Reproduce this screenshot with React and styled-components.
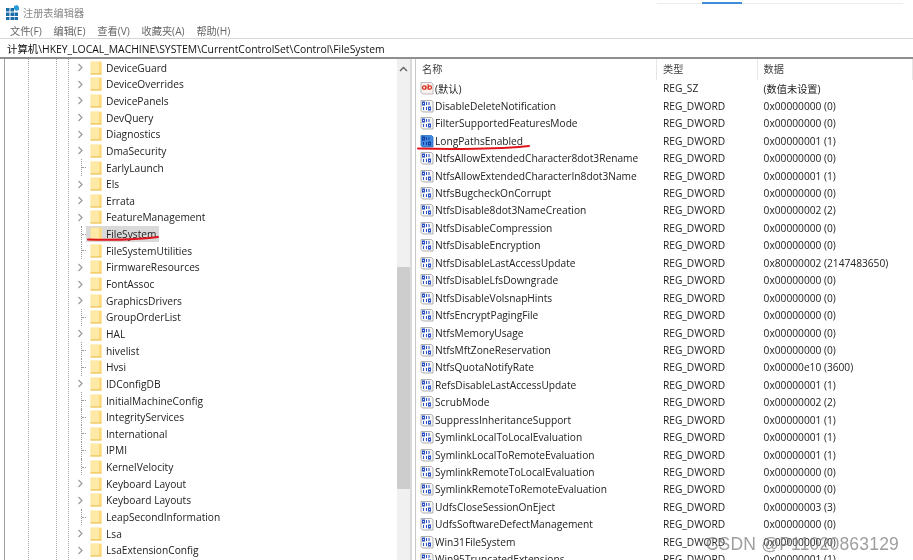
import React from 'react'
import styled, { createGlobalStyle } from 'styled-components'

const Global = createGlobalStyle`
  html, body { margin: 0; padding: 0; background: #fff; overflow: hidden; }
  #root { width: 913px; height: 560px; }
`

const uiFont = `"Open Sans", "Noto Sans CJK SC", sans-serif`

const Window = styled.div`
  position: relative;
  width: 913px;
  height: 560px;
  display: flex;
  flex-direction: column;
  overflow: hidden;
  background: #fff;
  font-family: ${uiFont};
  font-size: 10.2px;
  color: #222;
  filter: blur(0.3px);
`
const TitleBar = styled.div`
  height: 22px;
  flex: none;
  display: flex;
  align-items: center;
  gap: 3px;
  padding: 3px 0 0 6px;
  box-sizing: border-box;
  color: #8a8a8a;
`
const MenuBar = styled.div`
  height: 16px;
  flex: none;
  display: flex;
  gap: 11.8px;
  padding-left: 10px;
  align-items: center;
  color: #666;
`
const AddressBar = styled.div`
  height: 21px;
  flex: none;
  box-sizing: border-box;
  border-top: 1px solid #d8d8d8;
  border-bottom: 2px solid #8f8f8f;
  padding-left: 7px;
  display: flex;
  align-items: center;
  font-size: 10.4px;
  color: #111;
`
const Body = styled.div`
  flex: 1;
  min-height: 0;
  display: flex;
  overflow: hidden;
`
const TreePane = styled.div`
  width: 393px;
  flex: none;
  box-sizing: border-box;
  padding-top: 0.4px;
  border-left: 1px solid #a0a0a0;
  margin-left: 4px;
  background-image:
    linear-gradient(#a8a8a8 50%, transparent 50%),
    linear-gradient(#a8a8a8 50%, transparent 50%),
    linear-gradient(#a8a8a8 50%, transparent 50%);
  background-size: 1px 2px;
  background-repeat: repeat-y;
  background-position: 23px 0, 51px 0, 63px 0;
`
const TreeRow = styled.div`
  height: 16.65px;
  display: flex;
  align-items: center;
  padding-left: 72px;
`
const Twist = styled.span`
  width: 9px;
  flex: none;
  display: flex;
  align-items: center;
  color: #9a9a9a;
`
const Connector = styled.span`
  width: 5px;
  height: 100%;
  margin-left: 4px;
  flex: none;
  box-sizing: border-box;
  border-left: 1px dotted #999;
  display: flex;
  align-items: center;
  &::after {
    content: '';
    width: 100%;
    border-top: 1px dotted #999;
  }
`
const Label = styled.div`
  display: flex;
  align-items: center;
  gap: 4px;
  height: 16.65px;
  padding: 0 3px 0 4px;
  background: ${p => (p.$on ? '#d9d9d9' : 'transparent')};
`
const Scrollbar = styled.div`
  width: 13px;
  flex: none;
  background: #f0f0f0;
  display: flex;
  flex-direction: column;
  align-items: center;
`
const ScrollUp = styled.div`
  height: 17px;
  margin-top: 3px;
  color: #606060;
`
const ScrollGap = styled.div`
  height: ${p => p.$h}px;
  flex: none;
`
const ScrollThumb = styled.div`
  width: 100%;
  height: 222px;
  flex: none;
  background: #cdcdcd;
`
const Splitter = styled.div`
  width: 6px;
  flex: none;
  background: #fff;
  border-left: 2px solid #d9d9d9;
  border-right: 1px solid #c9c9c9;
  box-sizing: border-box;
`
const ListPane = styled.div`
  flex: 1;
  min-width: 0;
`
const Grid = styled.div`
  display: grid;
  grid-template-columns: 241px 100.6px 1fr;
  align-items: center;
`
const HeadRow = styled(Grid)`
  height: 20.7px;
  color: #444;
`
const HeadCell = styled.div`
  height: 100%;
  display: flex;
  align-items: center;
  padding: 0 0 2px 6px;
  box-sizing: border-box;
  border-right: 1px solid #e6e6e6;
`
const ListRow = styled(Grid)`
  height: 17.45px;
  white-space: nowrap;
`
const NameCell = styled.div`
  display: flex;
  align-items: center;
  gap: 1px;
  padding-left: 4px;
`
const ValueCell = styled.div`
  padding-left: 6px;
`
const Watermark = styled.div`
  position: absolute;
  right: 14px;
  bottom: 5px;
  font-family: "Liberation Sans", sans-serif;
  font-size: 17.5px;
  letter-spacing: 0.2px;
  color: rgba(120, 120, 120, 0.72);
`
const Ink = styled.svg`
  position: absolute;
  left: 0;
  top: 0;
  pointer-events: none;
`
const TabTrace = styled.div`
  position: absolute;
  left: 657px;
  top: 3px;
  width: 246px;
  height: 1px;
  background: #ededed;
`
const TabActive = styled.div`
  position: absolute;
  left: 702px;
  top: 2px;
  width: 40px;
  height: 2px;
  background: #3c8fd6;
`

const Chevron = () => (
  <svg width="7" height="9" viewBox="0 0 7 9">
    <path d="M1.5 1 L5 4.5 L1.5 8" fill="none" stroke="currentColor" strokeWidth="1.2" />
  </svg>
)

const Folder = () => (
  <svg width="12" height="14" viewBox="0 0 12 14" style={{ flex: 'none' }}>
    <rect x="0.5" y="0.5" width="11" height="13" fill="#fde08a" />
    <rect x="1" y="1" width="8" height="11.5" fill="#ffe9a6" />
    <rect x="9" y="1" width="2.5" height="12" fill="#fbd97c" />
    <rect x="0.5" y="12.3" width="11" height="1.2" fill="#edc660" />
  </svg>
)

const BinIcon = ({ active }) => {
  const ink = active ? '#143f9e' : '#2a50c8'
  return (
    <svg width="14" height="14" viewBox="0 0 14 14" style={{ flex: 'none' }}>
      <path d="M1 1.5 H11.5 L13 3 V13 H2.5 L1 11.5 Z" fill={active ? '#3f8ae0' : '#f6f6f6'} stroke={active ? '#2f6cc0' : '#a0a0a0'} strokeWidth="0.8" />
      <g fill="none" stroke={ink} strokeWidth="1">
        <rect x="2.5" y="3" width="2" height="3" />
        <path d="M6.5 3 V6 M9 3 V6" />
        <path d="M3.5 8 V11 M6.5 8 V11" />
        <rect x="8.5" y="8" width="2" height="3" />
      </g>
    </svg>
  )
}

const StrIcon = () => (
  <svg width="14" height="14" viewBox="0 0 14 14" style={{ flex: 'none' }}>
    <path d="M1 1.5 H11.5 L13 3 V13 H2.5 L1 11.5 Z" fill="#fbf3f0" stroke="#b0a8a8" strokeWidth="0.8" />
    <circle cx="4.2" cy="6.6" r="1.7" fill="none" stroke="#d8301f" strokeWidth="1.2" />
    <path d="M5.9 4.8 V8.4" stroke="#d8301f" strokeWidth="1.1" />
    <circle cx="9.8" cy="6.6" r="1.7" fill="none" stroke="#d8301f" strokeWidth="1.2" />
    <path d="M8.1 3 V8.4" stroke="#d8301f" strokeWidth="1.1" />
  </svg>
)

const treeItems = [
  ['DeviceGuard'], ['DeviceOverrides'], ['DevicePanels'], ['DevQuery'], ['Diagnostics'],
  ['DmaSecurity'], ['EarlyLaunch', true], ['Els'], ['Errata'], ['FeatureManagement'],
  ['FileSystem', true, true], ['FileSystemUtilities', true], ['FirmwareResources'],
  ['FontAssoc'], ['GraphicsDrivers'], ['GroupOrderList', true], ['HAL'], ['hivelist', true],
  ['Hvsi', true], ['IDConfigDB'], ['InitialMachineConfig', true], ['IntegrityServices', true],
  ['International', true], ['IPMI', true], ['KernelVelocity', true], ['Keyboard Layout'],
  ['Keyboard Layouts'], ['LeapSecondInformation', true], ['Lsa'], ['LsaExtensionConfig'],
]

const dw = (name, value) => ({ name, value, type: 'REG_DWORD' })
const listItems = [
  { name: '(默认)', value: '(数值未设置)', type: 'REG_SZ', str: true },
  dw('DisableDeleteNotification', '0x00000000 (0)'),
  dw('FilterSupportedFeaturesMode', '0x00000000 (0)'),
  { ...dw('LongPathsEnabled', '0x00000001 (1)'), active: true },
  dw('NtfsAllowExtendedCharacter8dot3Rename', '0x00000000 (0)'),
  dw('NtfsAllowExtendedCharacterIn8dot3Name', '0x00000001 (1)'),
  dw('NtfsBugcheckOnCorrupt', '0x00000000 (0)'),
  dw('NtfsDisable8dot3NameCreation', '0x00000002 (2)'),
  dw('NtfsDisableCompression', '0x00000000 (0)'),
  dw('NtfsDisableEncryption', '0x00000000 (0)'),
  dw('NtfsDisableLastAccessUpdate', '0x80000002 (2147483650)'),
  dw('NtfsDisableLfsDowngrade', '0x00000000 (0)'),
  dw('NtfsDisableVolsnapHints', '0x00000000 (0)'),
  dw('NtfsEncryptPagingFile', '0x00000000 (0)'),
  dw('NtfsMemoryUsage', '0x00000000 (0)'),
  dw('NtfsMftZoneReservation', '0x00000000 (0)'),
  dw('NtfsQuotaNotifyRate', '0x00000e10 (3600)'),
  dw('RefsDisableLastAccessUpdate', '0x00000001 (1)'),
  dw('ScrubMode', '0x00000002 (2)'),
  dw('SuppressInheritanceSupport', '0x00000001 (1)'),
  dw('SymlinkLocalToLocalEvaluation', '0x00000001 (1)'),
  dw('SymlinkLocalToRemoteEvaluation', '0x00000001 (1)'),
  dw('SymlinkRemoteToLocalEvaluation', '0x00000000 (0)'),
  dw('SymlinkRemoteToRemoteEvaluation', '0x00000000 (0)'),
  dw('UdfsCloseSessionOnEject', '0x00000003 (3)'),
  dw('UdfsSoftwareDefectManagement', '0x00000000 (0)'),
  dw('Win31FileSystem', '0x00000000 (0)'),
  dw('Win95TruncatedExtensions', '0x00000001 (1)'),
]

export default function App() {
  return (
    <Window>
      <Global />
      <TitleBar>
        <svg width="14" height="15" viewBox="0 0 14 15">
          <path d="M0 3 h3.5 v3.5 h-3.5 z M4.5 3 h3.5 v3.5 h-3.5 z M0 7.5 h3.5 v3.5 h-3.5 z M4.5 7.5 h3.5 v3.5 h-3.5 z M8.5 7.5 h3.5 v3.5 h-3.5 z M0 12 h3.5 v3 h-3.5 z M4.5 12 h3.5 v3 h-3.5 z M8.5 12 h3.5 v3 h-3.5 z" fill="#1b6fa8" />
          <path d="M8 1 l3 -1 l2 2 v3 l-3 1 l-2 -2 z" fill="#2a9ad8" />
        </svg>
        <span>注册表编辑器</span>
      </TitleBar>
      <MenuBar>
        <span>文件(F)</span>
        <span>编辑(E)</span>
        <span>查看(V)</span>
        <span>收藏夹(A)</span>
        <span>帮助(H)</span>
      </MenuBar>
      <AddressBar>计算机\HKEY_LOCAL_MACHINE\SYSTEM\CurrentControlSet\Control\FileSystem</AddressBar>
      <Body>
        <TreePane>
          {treeItems.map(([name, leaf, on]) => (
            <TreeRow key={name}>
              {leaf ? <Connector /> : <Twist><Chevron /></Twist>}
              <Label $on={on}>
                <Folder />
                <span>{name}</span>
              </Label>
            </TreeRow>
          ))}
        </TreePane>
        <Scrollbar>
          <ScrollUp>
            <svg width="9" height="7" viewBox="0 0 9 7">
              <path d="M1 5 L4.5 1.5 L8 5" fill="none" stroke="currentColor" strokeWidth="1.4" />
            </svg>
          </ScrollUp>
          <ScrollGap $h={188} />
          <ScrollThumb />
        </Scrollbar>
        <Splitter />
        <ListPane>
          <HeadRow>
            <HeadCell>名称</HeadCell>
            <HeadCell>类型</HeadCell>
            <HeadCell>数据</HeadCell>
          </HeadRow>
          {listItems.map(item => (
            <ListRow key={item.name}>
              <NameCell>
                {item.str ? <StrIcon /> : <BinIcon active={item.active} />}
                <span>{item.name}</span>
              </NameCell>
              <ValueCell>{item.type}</ValueCell>
              <ValueCell>{item.value}</ValueCell>
            </ListRow>
          ))}
        </ListPane>
      </Body>
      <TabTrace />
      <TabActive />
      <Ink width="913" height="560" viewBox="0 0 913 560">
        <path d="M88 239.5 C105 240 135 240 158 237" fill="none" stroke="#e0141c" strokeWidth="2" strokeLinecap="round" />
        <path d="M418 148.5 C450 149.5 500 149 529 146" fill="none" stroke="#e0141c" strokeWidth="2" strokeLinecap="round" />
      </Ink>
      <Watermark>CSDN @P11020863129</Watermark>
    </Window>
  )
}
